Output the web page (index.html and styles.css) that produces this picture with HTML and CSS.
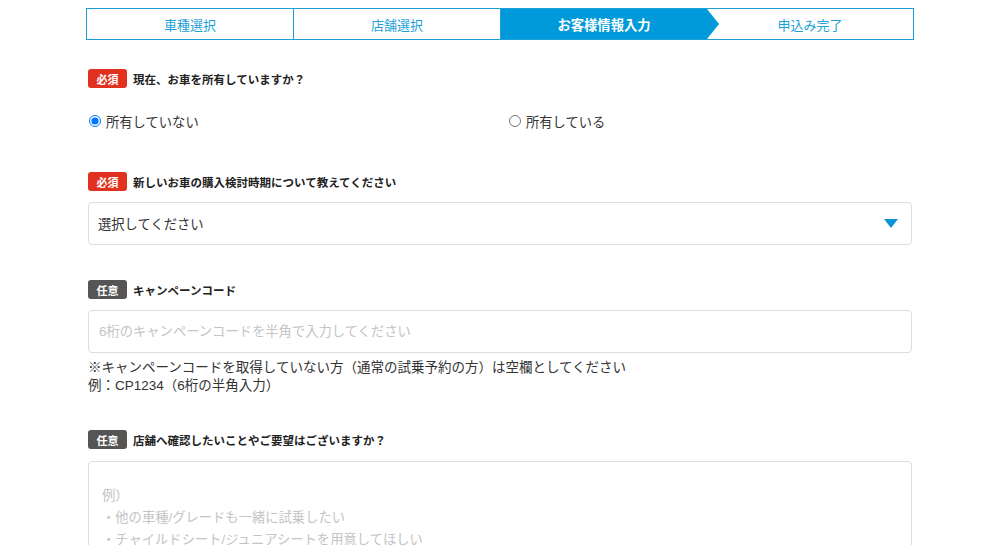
FILE: index.html
```html
<!DOCTYPE html>
<html lang="ja">
<head>
  <meta charset="UTF-8" />
  <meta name="viewport" content="width=device-width, initial-scale=1.0"/>
  <title>お客様情報入力</title>
  <link rel="stylesheet" href="styles.css">
</head>
<body>
  <div class="container">
    <ol class="steps">
      <li class="step">車種選択</li>
      <li class="step">店舗選択</li>
      <li class="step active">お客様情報入力</li>
      <li class="step">申込み完了</li>
    </ol>

    <form class="form">
      <div class="field field-radio">
        <p class="label"><span class="badge required">必須</span>現在、お車を所有していますか？</p>
        <div class="radios">
          <label><input type="radio" name="own" checked /> 所有していない</label>
          <label><input type="radio" name="own" /> 所有している</label>
        </div>
      </div>

      <div class="field">
        <p class="label"><span class="badge required">必須</span>新しいお車の購入検討時期について教えてください</p>
        <div class="select">
          <span>選択してください</span>
          <svg class="caret" width="14" height="9" viewBox="0 0 14 9"><path d="M0 0 H14 L7 9 Z" fill="#0a96d4"/></svg>
        </div>
      </div>

      <div class="field">
        <p class="label"><span class="badge optional">任意</span>キャンペーンコード</p>
        <input class="text-input" type="text" placeholder="6桁のキャンペーンコードを半角で入力してください" />
        <p class="note">※キャンペーンコードを取得していない方（通常の試乗予約の方）は空欄としてください<br>例：CP1234（6桁の半角入力）</p>
      </div>

      <div class="field field-last">
        <p class="label"><span class="badge optional">任意</span>店舗へ確認したいことやご要望はございますか？</p>
        <textarea class="textarea" placeholder="例）&#10;・他の車種/グレードも一緒に試乗したい&#10;・チャイルドシート/ジュニアシートを用意してほしい"></textarea>
      </div>
    </form>
  </div>
</body>
</html>
```

FILE: styles.css
```css
body {
  font-family: "Liberation Sans", "Noto Sans CJK JP", sans-serif;
  margin: 0;
  padding: 0;
  background-color: #fff;
  color: #333;
}

.container {
  width: 824px;
  margin-left: 88px;
  padding-top: 8px;
}

/* steps */
.steps {
  list-style: none;
  margin: 0 -2px;
  padding: 0;
  display: flex;
  border: 1px solid #1e9fd8;
  height: 30px;
}

.step {
  flex: 1;
  display: flex;
  align-items: center;
  justify-content: center;
  font-size: 13px;
  color: #1e9fd8;
  border-left: 1px solid #1e9fd8;
  position: relative;
}

.step:first-child {
  border-left: none;
}

.step.active {
  background-color: #0099d9;
  color: #fff;
  font-weight: bold;
  font-size: 13.3px;
}

.step.active::after {
  content: "";
  position: absolute;
  right: -12px;
  top: 0;
  border-top: 15px solid transparent;
  border-bottom: 15px solid transparent;
  border-left: 12px solid #0099d9;
  z-index: 1;
}

.step.active + .step {
  border-left: none;
}

/* form */
.form {
  padding-top: 29px;
}

.field {
  margin-bottom: 35px;
}

.field-radio {
  margin-bottom: 41px;
}

.label {
  margin: 0 0 11px;
  font-size: 11.5px;
  font-weight: bold;
  color: #222;
  display: flex;
  align-items: center;
  height: 19px;
}

.field-last .label {
  margin-bottom: 12px;
}

.badge {
  display: inline-flex;
  align-items: center;
  justify-content: center;
  width: 39px;
  height: 19px;
  border-radius: 3px;
  color: #fff;
  font-size: 11px;
  font-weight: bold;
  margin-right: 6px;
}

.badge.required {
  background-color: #e1321f;
}

.badge.optional {
  background-color: #555;
}

.radios {
  display: grid;
  grid-template-columns: 1fr 1fr;
  gap: 16px;
  margin-top: 23px;
  height: 20px;
}

.radios label {
  font-size: 13.3px;
  display: flex;
  align-items: center;
  color: #333;
}

.radios input {
  margin: 0 5px 0 1px;
  width: 12px;
  height: 12px;
}

.select {
  height: 41px;
  border: 1px solid #ddd;
  border-radius: 4px;
  display: flex;
  align-items: center;
  justify-content: space-between;
  padding: 0 13px 0 9px;
  font-size: 13.3px;
  color: #333;
}

.text-input {
  box-sizing: border-box;
  width: 100%;
  height: 43px;
  border: 1px solid #ddd;
  border-radius: 4px;
  padding: 0 10px;
  font-family: inherit;
  font-size: 13.3px;
  display: block;
}

.text-input::placeholder,
.textarea::placeholder {
  color: #c4c4c4;
}

.note {
  margin: 6px 0 0;
  font-size: 13.5px;
  line-height: 18px;
  color: #333;
}

.textarea {
  box-sizing: border-box;
  width: 100%;
  height: 140px;
  border: 1px solid #ddd;
  border-radius: 4px;
  padding: 23px 13px;
  font-family: inherit;
  font-size: 13.3px;
  line-height: 22px;
  resize: none;
  display: block;
}
```
